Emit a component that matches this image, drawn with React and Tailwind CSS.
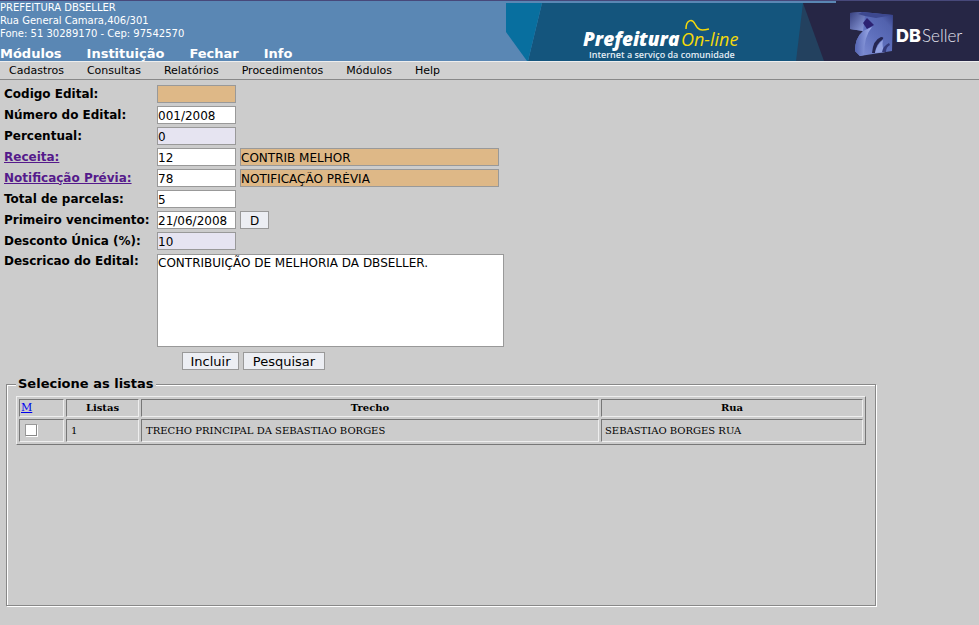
import React from "react";

const modules = ["Módulos", "Instituição", "Fechar", "Info"];
const menu = ["Cadastros", "Consultas", "Relatórios", "Procedimentos", "Módulos", "Help"];

const fieldBase =
  "h-[18px] shrink-0 border border-[#999] pt-0.5 font-['DejaVu_Sans',sans-serif] text-[12px] font-normal leading-[14px] text-black outline-none";
const tones = {
  white: "bg-white",
  tan: "bg-[#deb887]",
  lilac: "bg-[#e6e4f1]",
};

function Field({ id, tone = "white", wide, value = "", label }) {
  return (
    <input
      id={id}
      aria-label={label}
      defaultValue={value}
      className={`${fieldBase} ${tones[tone]} ${wide ? "w-[259px]" : "w-[79px]"}`}
    />
  );
}

function Row({ id, label, link, children }) {
  return (
    <div className="flex h-[21px] items-center">
      <label htmlFor={id} className="w-[153px] shrink-0 whitespace-nowrap">
        {link ? (
          <a href="#" className="text-[#551a8b] underline">
            {label}
          </a>
        ) : (
          label
        )}
      </label>
      <div className="flex gap-1">{children}</div>
    </div>
  );
}

function Button({ children, className }) {
  return (
    <button
      type="button"
      className={`h-[18px] border border-[#999] bg-[#eceef3] pt-px font-['DejaVu_Sans',sans-serif] font-normal leading-[16px] text-black ${className}`}
    >
      {children}
    </button>
  );
}

function Banner() {
  return (
    <svg viewBox="0 0 473 61" className="block h-[61px] w-[473px] shrink-0" role="img" aria-label="Prefeitura On-line DBSeller">
      <defs>
        <linearGradient id="cubeFace" x1="0" y1="1" x2="1" y2="0">
          <stop offset="0" stopColor="#8795da" />
          <stop offset="0.5" stopColor="#5f70bd" />
          <stop offset="0.8" stopColor="#5262ad" />
          <stop offset="1" stopColor="#303a80" />
        </linearGradient>
        <linearGradient id="cubeSide" x1="0" y1="0" x2="1" y2="1">
          <stop offset="0" stopColor="#37407f" />
          <stop offset="1" stopColor="#8f9fdf" />
        </linearGradient>
        <linearGradient id="cubeCurve" x1="0" y1="0" x2="1" y2="0">
          <stop offset="0" stopColor="#5363b2" />
          <stop offset="1" stopColor="#a3b2ee" />
        </linearGradient>
      </defs>
      <rect width="473" height="61" fill="#5a87b4" />
      <path d="M36 3H300V61H22Z" fill="#14557d" />
      <path d="M0 3H36L22 61H21L0 32Z" fill="#086f9f" />
      <path d="M297 3H473V61H290Z" fill="#23415f" />
      <path d="M297 3H473V61H318Z" fill="#262645" />
      <rect x="330" y="1" width="143" height="3" fill="#262645" />
      <rect width="473" height="1" fill="#47487a" />
      <text x="77" y="46" fill="#fff" fontFamily="'Open Sans', sans-serif" fontWeight="800" fontStyle="italic" fontSize="19">
        Prefeitura
      </text>
      <text x="175" y="46" fill="#f5d90a" fontFamily="'Open Sans', sans-serif" fontWeight="500" fontStyle="italic" fontSize="18">
        On-line
      </text>
      <path d="M180 29C180 20 186 18 189 24S194 31 203 29" fill="none" stroke="#f5d90a" strokeWidth="1.5" />
      <text x="83" y="58" fill="#e3edf5" fontFamily="'Open Sans', sans-serif" fontWeight="600" fontSize="9">
        Internet a serviço da comunidade
      </text>
      <path d="M344 13L356 12L387 15L386 51L354 56L349 51Q349 38 357 31L344 29Z" fill="url(#cubeFace)" />
      <path d="M344 13L356 12L359 15L357 31L344 29Z" fill="url(#cubeSide)" />
      <path d="M352 14L356 12L387 15L370 18L359 16Z" fill="#3d488f" />
      <path d="M361 18L368 25L361 29L357 23Z" fill="#2c2272" />
      <path d="M349 51Q349 38 357 31L366 27Q358 36 358 55L354 56Z" fill="url(#cubeCurve)" />
      <path d="M366 53Q367 40 375 37Q379 37 376 40Q370 44 369 53Z" fill="#252653" />
      <path d="M369 53Q371 44 377 40Q375 47 380 52Z" fill="#93a2e2" />
      <path d="M376 52Q377 46 383 43L384 45Q380 47 380 52Z" fill="#343b7c" />
      <text x="390" y="42" fill="#fff" fontFamily="Inter, sans-serif" fontWeight="800" fontSize="18">
        DB
      </text>
      <text x="416" y="42" fill="#e4e4ee" fontFamily="Lato, sans-serif" fontWeight="300" fontSize="17">
        Seller
      </text>
    </svg>
  );
}

const cell = "border border-b-[#eee] border-l-[#777] border-r-[#eee] border-t-[#777]";

export default function App() {
  return (
    <div className="min-h-screen bg-[#ccc] font-['DejaVu_Sans',sans-serif] text-[12px] text-black">
      <header className="flex h-[61px] border-t border-[#47487a] bg-[#5a87b4] text-white">
        <div className="flex-1 whitespace-nowrap">
          <div className="text-[10px] leading-[13px]">
            <p>PREFEITURA DBSELLER</p>
            <p>Rua General Camara,406/301</p>
            <p>Fone: 51 30289170 - Cep: 97542570</p>
          </div>
          <nav className="flex gap-[25px] pt-[7px] text-[13px] font-bold leading-[14px]">
            {modules.map((m) => (
              <a key={m} href="#">
                {m}
              </a>
            ))}
          </nav>
        </div>
        <div className="-mt-px">
          <Banner />
        </div>
      </header>
      <nav className="flex h-[19px] gap-[23px] border-b border-t border-b-[#888] border-t-[#eee] bg-[#d0d0d0] pl-[9px] text-[11px] leading-[17px]">
        {menu.map((m) => (
          <a key={m} href="#">
            {m}
          </a>
        ))}
      </nav>

      <form className="pt-[3px]">
        <div className="pl-1 text-[12px] font-bold">
          <Row id="codigo" label="Codigo Edital:">
            <Field id="codigo" tone="tan" />
          </Row>
          <Row id="numero" label="Número do Edital:">
            <Field id="numero" value="001/2008" />
          </Row>
          <Row id="percentual" label="Percentual:">
            <Field id="percentual" tone="lilac" value="0" />
          </Row>
          <Row id="receita" label="Receita:" link>
            <Field id="receita" value="12" />
            <Field id="receitaNome" label="Descrição da receita" tone="tan" wide value="CONTRIB MELHOR" />
          </Row>
          <Row id="notificacao" label="Notificação Prévia:" link>
            <Field id="notificacao" value="78" />
            <Field id="notificacaoNome" label="Descrição da notificação" tone="tan" wide value="NOTIFICAÇÃO PRÉVIA" />
          </Row>
          <Row id="parcelas" label="Total de parcelas:">
            <Field id="parcelas" value="5" />
          </Row>
          <Row id="vencimento" label="Primeiro vencimento:">
            <Field id="vencimento" value="21/06/2008" />
            <Button className="w-[29px] text-[12px]">D</Button>
          </Row>
          <Row id="desconto" label="Desconto Única (%):">
            <Field id="desconto" tone="lilac" value="10" />
          </Row>
          <div className="flex items-start pt-[3px]">
            <label htmlFor="descricao" className="w-[153px] shrink-0 whitespace-nowrap leading-[14px]">
              Descricao do Edital:
            </label>
            <textarea
              id="descricao"
              className="block h-[93px] w-[347px] resize-none border border-[#999] bg-white p-0 font-['DejaVu_Sans',sans-serif] text-[12px] font-normal leading-[16px] outline-none"
              defaultValue="CONTRIBUIÇÃO DE MELHORIA DA DBSELLER."
            />
          </div>
        </div>

        <div className="flex gap-1 pl-[182px] pt-[5px] text-[13px]">
          <Button className="w-[57px]">Incluir</Button>
          <Button className="w-[82px]">Pesquisar</Button>
        </div>

        <fieldset className="ml-1.5 mr-[103px] mt-[6px] h-[230px] border border-[#888] px-[9px] shadow-[1px_1px_0_#fff,inset_1px_1px_0_#fff]">
          <legend className="bg-[#ccc] px-0.5 text-[13px] font-bold leading-[16px]">Selecione as listas</legend>
          <table className="mt-1 w-full table-fixed border-separate border-spacing-[2px] border border-b-[#777] border-l-[#eee] border-r-[#777] border-t-[#eee] font-['DejaVu_Serif',serif] text-[10px] leading-[14px]">
            <colgroup>
              <col className="w-[45px]" />
              <col className="w-[73px]" />
              <col />
              <col className="w-[262px]" />
            </colgroup>
            <thead>
              <tr className="h-[18px]">
                <th className={`${cell} px-px text-left text-[11px] font-normal`}>
                  <a href="#" className="text-[#0000ee] underline">
                    M
                  </a>
                </th>
                <th className={cell}>Listas</th>
                <th className={cell}>Trecho</th>
                <th className={cell}>Rua</th>
              </tr>
            </thead>
            <tbody>
              <tr className="h-[23px]">
                <td className={`${cell} pl-[5px]`}>
                  <input
                    type="checkbox"
                    aria-label="Selecionar lista 1"
                    className="block size-[13px] appearance-none border border-b-white border-l-[#999] border-r-white border-t-[#999] bg-white shadow-[inset_-1px_-1px_0_#888]"
                  />
                </td>
                <td className={`${cell} px-1`}>1</td>
                <td className={`${cell} px-1`}>TRECHO PRINCIPAL DA SEBASTIAO BORGES</td>
                <td className={`${cell} px-[3px]`}>SEBASTIAO BORGES RUA</td>
              </tr>
            </tbody>
          </table>
        </fieldset>
      </form>
    </div>
  );
}
